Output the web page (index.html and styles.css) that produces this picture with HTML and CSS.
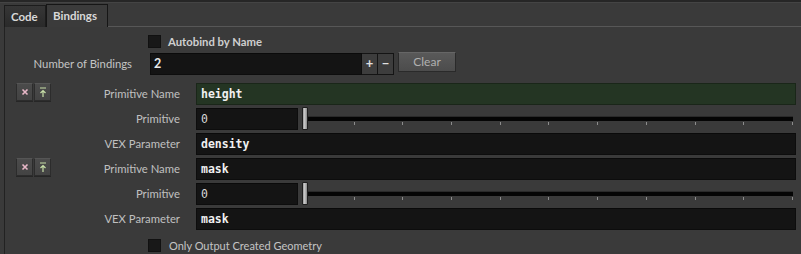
FILE: index.html
```html
<!DOCTYPE html>
<html>
<head>
<meta charset="utf-8">
<link rel="stylesheet" href="styles.css">
</head>
<body>
<div class="topbar"></div>
<div class="tabs">
  <div class="tab">Code</div>
  <div class="tab active">Bindings</div>
  <div class="tabfill"></div>
</div>
<div class="panel">
  <div class="row-auto">
    <span class="cb"></span><span class="cb-label bold">Autobind by Name</span>
  </div>
  <div class="row-num">
    <div class="num-label">Number of Bindings</div>
    <div class="field num">2</div>
    <div class="pm">+</div>
    <div class="pm">&minus;</div>
    <div class="clear">Clear</div>
  </div>
  <div class="inst">
    <div class="lab first">
      <div class="ibtns">
        <div class="ibtn"><svg width="8" height="8" viewBox="0 0 8 8"><path d="M1.5 1.5 L6.5 6.5 M6.5 1.5 L1.5 6.5" stroke="#e8b8c8" stroke-width="1.6"/></svg></div>
        <div class="ibtn"><svg width="8" height="11" viewBox="0 0 8 11"><path d="M1 1 H7 M4 3.5 V10 M1.5 6 L4 3.5 L6.5 6" stroke="#c8e0a8" stroke-width="1.2" fill="none"/></svg></div>
      </div>
      <span>Primitive Name</span>
    </div>
    <div class="field mono green">height</div>
    <div class="lab">Primitive</div>
    <div class="sliderrow">
      <div class="field small">0</div>
      <div class="slider">
        <div class="handle"></div>
        <div class="trackwrap">
          <div class="track"></div>
          <div class="ticks"><i></i><i></i><i></i><i></i><i></i><i></i><i></i><i></i><i></i><i></i><i></i></div>
        </div>
      </div>
    </div>
    <div class="lab">VEX Parameter</div>
    <div class="field mono">density</div>

    <div class="lab first">
      <div class="ibtns">
        <div class="ibtn"><svg width="8" height="8" viewBox="0 0 8 8"><path d="M1.5 1.5 L6.5 6.5 M6.5 1.5 L1.5 6.5" stroke="#e8b8c8" stroke-width="1.6"/></svg></div>
        <div class="ibtn"><svg width="8" height="11" viewBox="0 0 8 11"><path d="M1 1 H7 M4 3.5 V10 M1.5 6 L4 3.5 L6.5 6" stroke="#c8e0a8" stroke-width="1.2" fill="none"/></svg></div>
      </div>
      <span>Primitive Name</span>
    </div>
    <div class="field mono">mask</div>
    <div class="lab">Primitive</div>
    <div class="sliderrow">
      <div class="field small">0</div>
      <div class="slider">
        <div class="handle"></div>
        <div class="trackwrap">
          <div class="track"></div>
          <div class="ticks"><i></i><i></i><i></i><i></i><i></i><i></i><i></i><i></i><i></i><i></i><i></i></div>
        </div>
      </div>
    </div>
    <div class="lab">VEX Parameter</div>
    <div class="field mono">mask</div>
  </div>
  <div class="row-only">
    <span class="cb"></span><span class="cb-label">Only Output Created Geometry</span>
  </div>
</div>
</body>
</html>
```

FILE: styles.css
```css
html, body {
  margin: 0;
  padding: 0;
  background: #3a3a3a;
  font-family: "Lato", "Open Sans", sans-serif;
  font-size: 11.3px;
  color: #c4c4c4;
  width: 801px;
  height: 254px;
  overflow: hidden;
}
.topbar {
  height: 2px;
  background: #262626;
  border-bottom: 1px solid #444;
}
.tabs {
  display: flex;
  height: 23px;
  margin-top: 1px;
  padding-left: 4px;
}
.tab {
  box-sizing: border-box;
  height: 22px;
  margin-top: 1px;
  padding: 0 7px;
  font-weight: bold;
  font-size: 11.5px;
  line-height: 21px;
  color: #d8d8d8;
  background: linear-gradient(#363636, #2a2a2a);
  border: 1px solid #1c1c1c;
  border-bottom: none;
}
.tab.active {
  height: 23px;
  margin-top: 0;
  width: 62px;
  background: #3b3b3b;
  border-color: #161616;
  padding: 0 0 0 6px;
  line-height: 22px;
}
.tab:first-child {
  width: 42px;
  padding-left: 6px;
}
.tabfill {
  flex: 1;
  align-self: flex-end;
  height: 1px;
  background: #575757;
}
.panel {
  box-sizing: border-box;
  margin-left: 4px;
  border-left: 1px solid #222;
  height: 230px;
  padding-top: 8px;
}
.bold { font-weight: bold; }
.row-auto, .row-only {
  display: flex;
  align-items: center;
  height: 13px;
  padding-left: 143px;
}
.row-only { margin-top: 9px; }
.cb {
  box-sizing: border-box;
  width: 13px;
  height: 13px;
  background: #181818;
  border: 1px solid #111;
}
.cb-label {
  margin-left: 7px;
  color: #cfcfcf;
}
.row-only .cb-label { margin-left: 8px; color: #c4c4c4; font-size: 11px; }
.row-num {
  display: flex;
  align-items: flex-start;
  height: 22px;
  margin-top: 5px;
}
.num-label {
  width: 127px;
  text-align: right;
  line-height: 22px;
  margin-right: 18px;
}
.field {
  box-sizing: border-box;
  height: 22px;
  background: #141414;
  border: 1px solid #0d0d0d;
  border-top-color: #0a0a0a;
  padding-left: 3px;
  line-height: 20px;
  color: #e8e8e8;
}
.num {
  width: 212px;
  font-weight: bold;
  font-size: 12.5px;
}
.pm {
  box-sizing: border-box;
  width: 16px;
  height: 22px;
  border: 1px solid #141414;
  border-left: none;
  background: #3d3d3d;
  color: #e0e0e0;
  font-weight: bold;
  font-size: 13px;
  text-align: center;
  line-height: 19px;
}
.clear {
  box-sizing: border-box;
  width: 58px;
  height: 20px;
  margin-top: -1px;
  margin-left: 4px;
  background: linear-gradient(#595959, #4c4c4c);
  border: 1px solid #2a2a2a;
  border-top-color: #666;
  color: #b0b0b0;
  text-align: center;
  line-height: 18px;
  font-size: 12px;
}
.inst {
  display: grid;
  grid-template-columns: 175px 600px;
  column-gap: 16px;
  row-gap: 3px;
  grid-auto-rows: 22px;
  margin-top: 8px;
}
.lab {
  text-align: right;
  line-height: 22px;
  color: #c0c0c0;
}
.lab.first {
  display: flex;
  justify-content: space-between;
  align-items: flex-start;
}
.ibtns {
  display: flex;
  gap: 1px;
  margin-left: 11px;
}
.ibtn {
  box-sizing: border-box;
  width: 17px;
  height: 18px;
  background: linear-gradient(#4b4b4b, #434343);
  border: 1px solid #2c2c2c;
  border-top-color: #555;
  box-shadow: 0 1px 0 #262626;
  display: flex;
  align-items: center;
  justify-content: center;
}
.mono {
  font-family: "DejaVu Sans Mono", monospace;
  font-weight: bold;
  font-size: 11.5px;
  padding-left: 4px;
  color: #f0f0f0;
}
.green {
  background: #243523;
  border-color: #1a2619;
}
.sliderrow {
  display: flex;
  align-items: stretch;
}
.small {
  width: 102px;
  font-family: "DejaVu Sans Mono", monospace;
  font-size: 11.5px;
  padding-left: 4px;
  color: #d8d8d8;
}
.slider {
  flex: 1;
  display: flex;
  margin-left: 4px;
}
.handle {
  box-sizing: border-box;
  width: 6px;
  height: 23px;
  margin-top: -1px;
  background: linear-gradient(90deg, #9a9a9a, #c8c8c8 40%, #8a8a8a);
  border: 1px solid #1e1e1e;
  border-radius: 1px;
}
.trackwrap {
  flex: 1;
  display: flex;
  flex-direction: column;
  padding-top: 8px;
  margin-right: 3px;
}
.track {
  height: 4px;
  background: #050505;
  border-top: 1px solid #2a2a2a;
}
.ticks {
  display: flex;
  justify-content: space-between;
  margin-top: 1px;
  margin-left: -3px;
}
.ticks i {
  display: block;
  width: 1px;
  height: 3px;
  background: #8c8c8c;
}
.ticks i:first-child { visibility: hidden; }
```
